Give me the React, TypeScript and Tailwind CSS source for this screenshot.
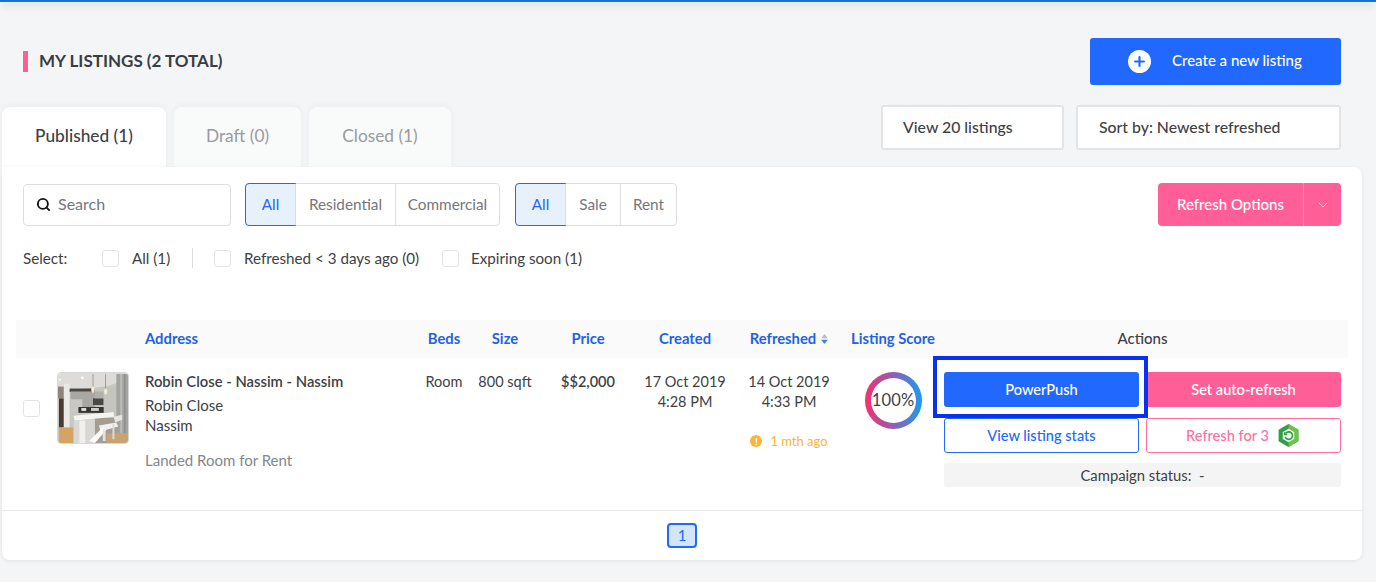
import React from 'react';
import { Plus, Search, ChevronDown } from 'lucide-react';

const font = { fontFamily: 'Lato, "Noto Sans", sans-serif' };

const Check: React.FC<{ className?: string }> = ({ className }) => (
  <span className={`block w-[17px] h-[17px] rounded-[3px] border border-[#e3e4e6] bg-white ${className ?? ''}`} />
);

const Segment: React.FC<{ items: { label: string; w: string }[] }> = ({ items }) => (
  <div className="flex h-[43px] rounded-[4px] border border-[#dcdde0] bg-white text-[15.3px]">
    {items.map((item, i) => (
      <div
        key={item.label}
        className={
          i === 0
            ? `${item.w} -m-px h-[43px] rounded-l-[4px] border-[1.5px] border-[#2169f6] bg-[#e7f1fc] text-[#2169f6] flex items-center justify-center`
            : `${item.w} border-l border-[#dcdde0] first:border-0 text-[#75777b] flex items-center justify-center`
        }
      >
        {item.label}
      </div>
    ))}
  </div>
);

const KitchenPhoto = () => (
  <svg viewBox="0 0 72 72" className="w-[72px] h-[72px] rounded-[4px] border border-[#d8d8d8] shrink-0">
    <defs>
      <filter id="soft"><feGaussianBlur stdDeviation="0.8" /></filter>
    </defs>
    <g filter="url(#soft)">
      <rect width="72" height="72" fill="#c8c6c2" />
      <polygon points="0,0 72,0 72,6 50,14 13,17 0,14" fill="#dedcd8" />
      <rect x="1" y="26" width="5" height="30" fill="#4a3b30" />
      <rect x="0" y="14" width="6" height="12" fill="#8d8579" />
      <rect x="6" y="11" width="6" height="61" fill="#ebe9e5" />
      <rect x="12" y="16" width="26" height="3.5" fill="#4b4741" />
      <rect x="13" y="19" width="25" height="16" fill="#a9a7a2" />
      <rect x="13" y="27" width="12" height="14" fill="#c9c8c5" />
      <rect x="36" y="26" width="11" height="7" fill="#4c4845" />
      <rect x="38" y="19" width="9" height="7" fill="#b3b1ac" />
      <rect x="21" y="35" width="36" height="6" fill="#37332f" />
      <rect x="24" y="36" width="5" height="3" fill="#dedbd6" />
      <rect x="34" y="36" width="8" height="3" fill="#cfcdc8" />
      <rect x="47" y="14" width="14" height="27" fill="#c6c4bf" />
      <rect x="60" y="1" width="12" height="71" fill="#a3a3a0" />
      <rect x="64" y="1" width="2" height="71" fill="#bcbcb8" />
      <rect x="68" y="1" width="1.5" height="71" fill="#8f8f8c" />
      <rect x="1" y="56" width="15" height="16" fill="#d3a462" />
      <rect x="36" y="46" width="26" height="26" fill="#a59d92" />
      <rect x="50" y="62" width="22" height="10" fill="#c9a470" />
      <polygon points="16,44 57,40 58,45 17,49" fill="#f5f4f1" />
      <polygon points="16,49 38,47 38,72 16,72" fill="#d9d7d3" />
      <rect x="22" y="49" width="6" height="23" fill="#f1f0ed" />
      <polygon points="42,54 60,51 62,55 44,60" fill="#f0efec" />
      <polygon points="57,45 66,43 66,48 59,51" fill="#e6e5e2" />
      <polygon points="32,70 46,56 50,58 38,72" fill="#fbfbfa" />
      <rect x="46" y="58" width="3" height="12" fill="#e3e2df" />
      <rect x="56" y="52" width="2" height="16" fill="#dcdbd8" />
      <rect x="35.6" y="1" width="0.8" height="14" fill="#8f8d88" />
      <ellipse cx="36" cy="17" rx="1.8" ry="3.2" fill="#f6ecd9" />
      <rect x="48.6" y="1" width="0.8" height="16" fill="#8f8d88" />
      <ellipse cx="49" cy="19" rx="1.6" ry="3" fill="#f6ecd9" />
      <circle cx="25" cy="5" r="1.4" fill="#ffffff" />
      <circle cx="2" cy="7" r="1" fill="#ffffff" />
    </g>
  </svg>
);

const RefreshToken = () => (
  <svg viewBox="0 0 24 24" className="w-[25px] h-[25px]">
    <polygon points="12,1 21.5,6.5 21.5,17.5 12,23 2.5,17.5 2.5,6.5" fill="#2f9e44" />
    <polygon points="12,1 21.5,6.5 21.5,17.5 12,23" fill="#6cc24a" />
    <polygon points="12,5.5 17.5,8.7 17.5,15.3 12,18.5 6.5,15.3 6.5,8.7" fill="#eef8ea" />
    <path d="M9.2 10.2a3.6 3.6 0 1 1-.3 3.2" fill="none" stroke="#2f9e44" strokeWidth="1.5" />
    <path d="M8.4 8.6v2.4h2.4" fill="none" stroke="#2f9e44" strokeWidth="1.3" />
  </svg>
);

export default function App() {
  return (
    <div style={font} className="relative w-[1376px] h-[582px] overflow-hidden bg-[#f4f5f7] text-[#3e4145] text-[15px]">
      <div className="h-[2px] bg-[#1275cc] shadow-[0_2px_8px_rgba(0,0,0,0.25)]" />

      <div className="flex items-center justify-between pl-[23px] pr-[35px] pt-[36px]">
        <div className="flex items-center gap-[11px]">
          <span className="block w-[5px] h-[21px] bg-[#ff5f96]" />
          <h1 className="text-[17px] font-bold text-[#3a3d41] pb-[2px]">MY LISTINGS (2 TOTAL)</h1>
        </div>
        <button className="w-[251px] h-[47px] rounded-[3px] bg-[#2169fe] text-white flex items-center pl-[38px] gap-[21px] font-medium">
          <span className="w-[23px] h-[23px] rounded-full bg-white flex items-center justify-center">
            <Plus size={15} strokeWidth={3.5} className="text-[#2169fe]" />
          </span>
          <span className="pb-[2px]">Create a new listing</span>
        </button>
      </div>

      <div className="flex justify-between items-start pl-[2px] pr-[35px] mt-[20px] h-[62px]">
        <div className="flex gap-[8px] text-[17.3px] pt-[2px]">
          <div className="w-[164px] h-[62px] rounded-t-[8px] bg-white flex items-center justify-center pb-[5px] font-medium shadow-[0_-2px_6px_rgba(0,0,0,0.04)]">Published (1)</div>
          <div className="w-[127px] h-[60px] rounded-t-[8px] bg-[#f9fafa] flex items-center justify-center pb-[2px] text-[#999b9e] shadow-[0_-2px_6px_rgba(0,0,0,0.04)]">Draft (0)</div>
          <div className="w-[142px] h-[60px] rounded-t-[8px] bg-[#f9fafa] flex items-center justify-center pb-[2px] text-[#999b9e] shadow-[0_-2px_6px_rgba(0,0,0,0.04)]">Closed (1)</div>
        </div>
        <div className="flex gap-[12px] text-[15.8px] font-medium">
          <div className="w-[183px] h-[45px] rounded-[3px] border-2 border-[#e3e4e6] bg-white flex items-center pl-[20px] pb-[2px]">View 20 listings</div>
          <div className="w-[265px] h-[45px] rounded-[3px] border-2 border-[#e3e4e6] bg-white flex items-center pl-[21px] pb-[2px]">Sort by: Newest refreshed</div>
        </div>
      </div>

      <div className="relative ml-[2px] w-[1360px] h-[393px] rounded-b-[8px] rounded-tr-[8px] bg-white shadow-[0_1px_4px_rgba(0,0,0,0.08)]">
        <div className="flex items-center pt-[16px] pl-[21px] pr-[21px]">
          <div className="w-[208px] h-[42px] rounded-[4px] border border-[#dcdde0] flex items-center pl-[12px] gap-[7px] text-[#75777b] text-[16px]">
            <Search size={15} strokeWidth={3} className="text-[#111]" />
            <span className="pb-[2px]">Search</span>
          </div>
          <div className="ml-[14px]">
            <Segment items={[{ label: 'All', w: 'w-[51px]' }, { label: 'Residential', w: 'w-[100px]' }, { label: 'Commercial', w: 'w-[104px]' }]} />
          </div>
          <div className="ml-[15px]">
            <Segment items={[{ label: 'All', w: 'w-[51px]' }, { label: 'Sale', w: 'w-[55px]' }, { label: 'Rent', w: 'w-[56px]' }]} />
          </div>
          <div className="ml-auto w-[183px] h-[43px] rounded-[4px] bg-[#ff5f96] text-white flex items-center font-medium">
            <span className="w-[146px] text-center border-r border-[#ff8cb4] leading-[43px]">Refresh Options</span>
            <span className="flex-1 flex justify-center"><ChevronDown size={16} strokeWidth={1} /></span>
          </div>
        </div>

        <div className="flex items-center h-[24px] mt-[20px] pl-[21px] text-[15.2px]">
          <span className="w-[79px]">Select:</span>
          <Check />
          <span className="ml-[13px] w-[60px]">All (1)</span>
          <span className="block w-px h-[20px] bg-[#dcdde0]" />
          <Check className="ml-[21px]" />
          <span className="ml-[13px] w-[198px]">Refreshed &lt; 3 days ago (0)</span>
          <Check />
          <span className="ml-[12px]">Expiring soon (1)</span>
        </div>

        <div className="ml-[14px] mt-[50px] w-[1332px] h-[38px] bg-[#fafafa] grid grid-cols-[129px_275px_48px_74px_92px_102px_106px_102px_397px_7px] items-center text-center font-bold text-[#1f62e8] text-[14.8px] pb-[1px]">
          <span />
          <span className="text-left">Address</span>
          <span>Beds</span>
          <span>Size</span>
          <span>Price</span>
          <span>Created</span>
          <span className="flex items-center justify-center gap-[5px]">
            Refreshed
            <svg viewBox="0 0 8 12" className="w-[7px] h-[10px]">
              <polygon points="4,0 8,5 0,5" fill="#b9bcc2" />
              <polygon points="4,12 8,7 0,7" fill="#3b82f6" />
            </svg>
          </span>
          <span>Listing Score</span>
          <span className="text-[#3e4145] font-medium text-[15px]">Actions</span>
          <span />
        </div>

        <div className="ml-[14px] w-[1332px] h-[152px] grid grid-cols-[129px_275px_48px_74px_92px_102px_106px_102px_397px_7px] items-start text-center text-[14.5px] pt-[14px]">
          <div className="flex items-start pl-[7px]">
            <Check className="mt-[28px]" />
            <div className="ml-[17px]"><KitchenPhoto /></div>
          </div>
          <div className="text-left text-[15px]">
            <div className="font-semibold leading-[20px] -mt-[1px] text-[14.8px]">Robin Close - Nassim - Nassim</div>
            <div className="mt-[4px] leading-[20px]">Robin Close</div>
            <div className="leading-[20px]">Nassim</div>
            <div className="mt-[15px] leading-[20px] text-[#85878a]">Landed Room for Rent</div>
          </div>
          <div className="leading-[20px]">Room</div>
          <div className="leading-[20px]">800 sqft</div>
          <div className="font-semibold leading-[20px]">$$2,000</div>
          <div className="leading-[20px]">17 Oct 2019<br />4:28 PM</div>
          <div className="leading-[20px]">
            14 Oct 2019<br />4:33 PM
            <div className="mt-[19px] flex items-center justify-center gap-[8px] text-[13px] text-[#fbb437]">
              <span className="w-[12px] h-[12px] rounded-full bg-[#fbb437] text-white text-[10px] leading-[12px] font-bold">!</span>
              1 mth ago
            </div>
          </div>
          <div className="flex justify-center">
            <div className="w-[57px] h-[57px] rounded-full bg-[linear-gradient(90deg,#f6306e,#8f5fb3,#1a9cf0)] p-[6px]">
              <div className="w-full h-full rounded-full bg-white flex items-center justify-center text-[16.5px] tracking-[0.2px]">100%</div>
            </div>
          </div>
          <div className="grid grid-cols-[195px_195px] gap-x-[7px] gap-y-[11px] font-medium text-[14.6px]">
            <button className="h-[35px] rounded-[3px] bg-[#2169fe] text-white">PowerPush</button>
            <button className="h-[35px] rounded-[3px] bg-[#ff5f96] text-white font-semibold">Set auto-refresh</button>
            <button className="h-[35px] rounded-[3px] border-[1.5px] border-[#2169fe] text-[#2169fe]">View listing stats</button>
            <button className="h-[35px] rounded-[3px] border-[1.5px] border-[#ff6f9f] text-[#ff6f9f] flex items-center justify-center gap-[7px]">Refresh for 3 <RefreshToken /></button>
            <div className="col-span-2 -mt-[1px] h-[24px] rounded-[3px] bg-[#f4f4f4] text-center leading-[24px] font-normal text-[14.8px]">Campaign status:&nbsp; -</div>
          </div>
          <span />
        </div>

        <div className="border-t border-[#e9eaec] h-[50px] flex items-center justify-center">
          <span className="w-[30px] h-[25px] rounded-[4px] border-2 border-[#2169fe] bg-[#d3e5f8] text-[#2169fe] text-center leading-[21px] text-[15px]">1</span>
        </div>

        {/* highlight drawn over the PowerPush button */}
        <div className="absolute left-[931px] top-[189px] w-[215px] h-[62px] border-[4px] border-[#0a30f0] pointer-events-none" />
      </div>
    </div>
  );
}
